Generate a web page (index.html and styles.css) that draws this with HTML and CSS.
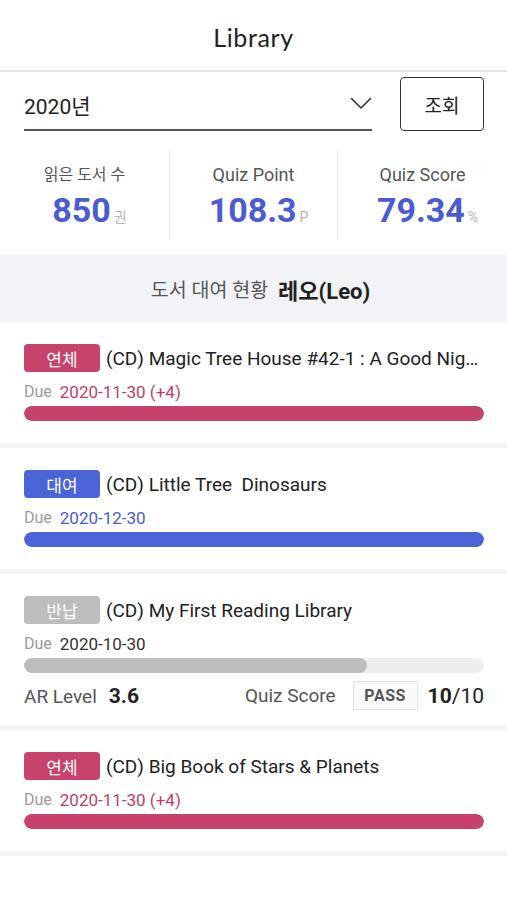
FILE: index.html
```html
<!DOCTYPE html>
<html lang="ko">
<head>
<meta charset="utf-8">
<title>Library</title>
<link rel="stylesheet" href="styles.css">
</head>
<body>
<div class="app">
  <header class="topbar"><h1 class="title">Library</h1></header>

  <div class="filter">
    <div class="select">
      <span class="select-value">2020년</span>
      <svg class="chevron" width="22" height="13" viewBox="0 0 22 13"><path d="M1.5 1.5 L11 11 L20.5 1.5" fill="none" stroke="#333" stroke-width="1.6" stroke-linecap="round" stroke-linejoin="round"/></svg>
    </div>
    <button class="btn">조회</button>
  </div>

  <div class="stats">
    <div class="stat">
      <div class="stat-label">읽은 도서 수</div>
      <div class="stat-value">850<span class="unit">권</span></div>
    </div>
    <div class="stat">
      <div class="stat-label latin">Quiz Point</div>
      <div class="stat-value">108.3<span class="unit">P</span></div>
    </div>
    <div class="stat">
      <div class="stat-label latin">Quiz Score</div>
      <div class="stat-value">79.34<span class="unit">%</span></div>
    </div>
  </div>

  <div class="section-head"><span>도서 대여 현황</span><strong>레오(Leo)</strong></div>

  <div class="card">
    <div class="card-top"><span class="tag tag-late">연체</span><span class="book">(CD) Magic Tree House #42-1 : A Good Nig…</span></div>
    <div class="due"><span class="due-label">Due</span><span class="due-date late">2020-11-30 (+4)</span></div>
    <div class="bar"><div class="fill fill-late" style="width:100%"></div></div>
  </div>

  <div class="card">
    <div class="card-top"><span class="tag tag-rent">대여</span><span class="book">(CD) Little Tree&nbsp; Dinosaurs</span></div>
    <div class="due"><span class="due-label">Due</span><span class="due-date rent">2020-12-30</span></div>
    <div class="bar"><div class="fill fill-rent" style="width:100%"></div></div>
  </div>

  <div class="card card-return">
    <div class="card-top"><span class="tag tag-return">반납</span><span class="book">(CD) My First Reading Library</span></div>
    <div class="due"><span class="due-label">Due</span><span class="due-date">2020-10-30</span></div>
    <div class="bar"><div class="fill fill-return" style="width:74.5%"></div></div>
    <div class="result">
      <div class="ar"><span class="ar-label">AR Level</span><span class="ar-value">3.6</span></div>
      <div class="score"><span class="score-label">Quiz Score</span><span class="pass">PASS</span><span class="score-value"><b>10</b>/10</span></div>
    </div>
  </div>

  <div class="card">
    <div class="card-top"><span class="tag tag-late">연체</span><span class="book">(CD) Big Book of Stars &amp; Planets</span></div>
    <div class="due"><span class="due-label">Due</span><span class="due-date late">2020-11-30 (+4)</span></div>
    <div class="bar"><div class="fill fill-late" style="width:100%"></div></div>
  </div>
</div>
</body>
</html>
```

FILE: styles.css
```css
* { box-sizing: border-box; }
html, body { margin: 0; padding: 0; background: #fff; }
body {
  font-family: Roboto, "Noto Sans CJK KR", sans-serif;
  color: #222;
  width: 507px;
}
.app { width: 507px; }

.topbar {
  height: 72px;
  border-bottom: 2px solid #e6e6e6;
  display: flex;
  align-items: center;
  justify-content: center;
}
.title {
  margin: 0;
  font-family: Lato, "Noto Sans", sans-serif;
  font-weight: 400;
  font-size: 25px;
  letter-spacing: 0.6px;
  color: #222;
  padding-top: 4px;
}

.filter {
  display: flex;
  align-items: flex-start;
  padding: 3px 23px 0 24px;
  height: 68px;
}
.select {
  flex: 1;
  height: 56px;
  border-bottom: 2px solid #555;
  display: flex;
  align-items: center;
  justify-content: space-between;
  padding-top: 6px;
  margin-right: 28px;
}
.select-value {
  font-size: 21px;
  color: #222;
  font-family: Roboto, "Noto Sans CJK KR", sans-serif;
}
.chevron { margin-top: -4px; }
.btn {
  width: 84px;
  height: 54px;
  margin-top: 2px;
  border: 1.5px solid #333;
  border-radius: 4px;
  background: #fff;
  font-family: "Noto Sans CJK KR", sans-serif;
  font-size: 19px;
  color: #222;
  padding: 0;
}

.stats {
  display: grid;
  grid-template-columns: 169px 168px 170px;
  padding: 10px 0 15px;
}
.stat {
  height: 90px;
  display: flex;
  flex-direction: column;
  align-items: center;
}
.stat + .stat { border-left: 1px solid #e8e8e8; }
.stat-label {
  margin-top: 14px;
  font-size: 16px;
  line-height: 22px;
  color: #555;
  font-family: Roboto, "Noto Sans CJK KR", sans-serif;
}
.stat-label.latin { font-size: 18px; }
.stat-value {
  margin-top: 3px;
  font-size: 34px;
  line-height: 42px;
  font-weight: 700;
  color: #4a5ccf;
  padding-left: 10px;
}
.unit {
  font-size: 14px;
  font-weight: 400;
  color: #b5b5b5;
  margin-left: 3px;
  font-family: Roboto, "Noto Sans CJK KR", sans-serif;
}

.section-head {
  height: 67px;
  background: #f2f3f7;
  display: flex;
  align-items: center;
  justify-content: center;
  font-size: 19.5px;
  color: #555;
  gap: 10px;
  padding-left: 14px;
}
.section-head strong {
  color: #222;
  font-weight: 700;
  font-size: 22px;
}

.card {
  padding: 22px 23px 22px 24px;
  border-bottom: 5px solid #f3f3f3;
}
.card-return { padding-bottom: 15px; }
.card-top {
  display: flex;
  align-items: center;
  height: 28px;
}
.tag {
  flex: 0 0 76px;
  height: 28px;
  border-radius: 4px;
  color: #fff;
  font-family: "Noto Sans CJK KR", sans-serif;
  font-size: 17px;
  display: flex;
  align-items: center;
  justify-content: center;
  margin-right: 6px;
}
.tag-late { background: #c8436c; }
.tag-rent { background: #4a63d6; }
.tag-return { background: #bdbdbd; }
.book {
  font-size: 19px;
  color: #222;
  white-space: nowrap;
  overflow: hidden;
  text-overflow: ellipsis;
  min-width: 0;
}
.due {
  margin-top: 10px;
  height: 20px;
  line-height: 20px;
  display: flex;
  align-items: center;
}
.due-label { color: #9a9a9a; margin-right: 8px; font-size: 16px; }
.due-date { color: #333; font-size: 17px; }
.due-date.late { color: #c23e67; }
.due-date.rent { color: #4a5ccf; }
.bar {
  margin-top: 4px;
  height: 15px;
  border-radius: 8px;
  background: #eeeeee;
  overflow: hidden;
}
.fill { height: 100%; border-radius: 8px; }
.fill-late { background: #c6426b; }
.fill-rent { background: #4a63d6; }
.fill-return { background: #bdbdbd; }

.result {
  margin-top: 8px;
  height: 29px;
  display: flex;
  align-items: center;
  justify-content: space-between;
}
.ar-label { font-size: 19px; color: #555; margin-right: 12px; }
.ar-value { font-size: 21px; font-weight: 700; color: #222; }
.score { display: flex; align-items: center; }
.score-label { font-size: 19px; color: #555; margin-right: 17px; }
.pass {
  width: 65px;
  height: 29px;
  border: 1px solid #dfe3e8;
  background: #f8fafc;
  border-radius: 2px;
  display: flex;
  align-items: center;
  justify-content: center;
  font-size: 16px;
  font-weight: 700;
  color: #555;
  letter-spacing: 0.5px;
  margin-right: 10px;
}
.score-value { font-size: 21px; color: #222; }
.score-value b { font-weight: 700; }
```
